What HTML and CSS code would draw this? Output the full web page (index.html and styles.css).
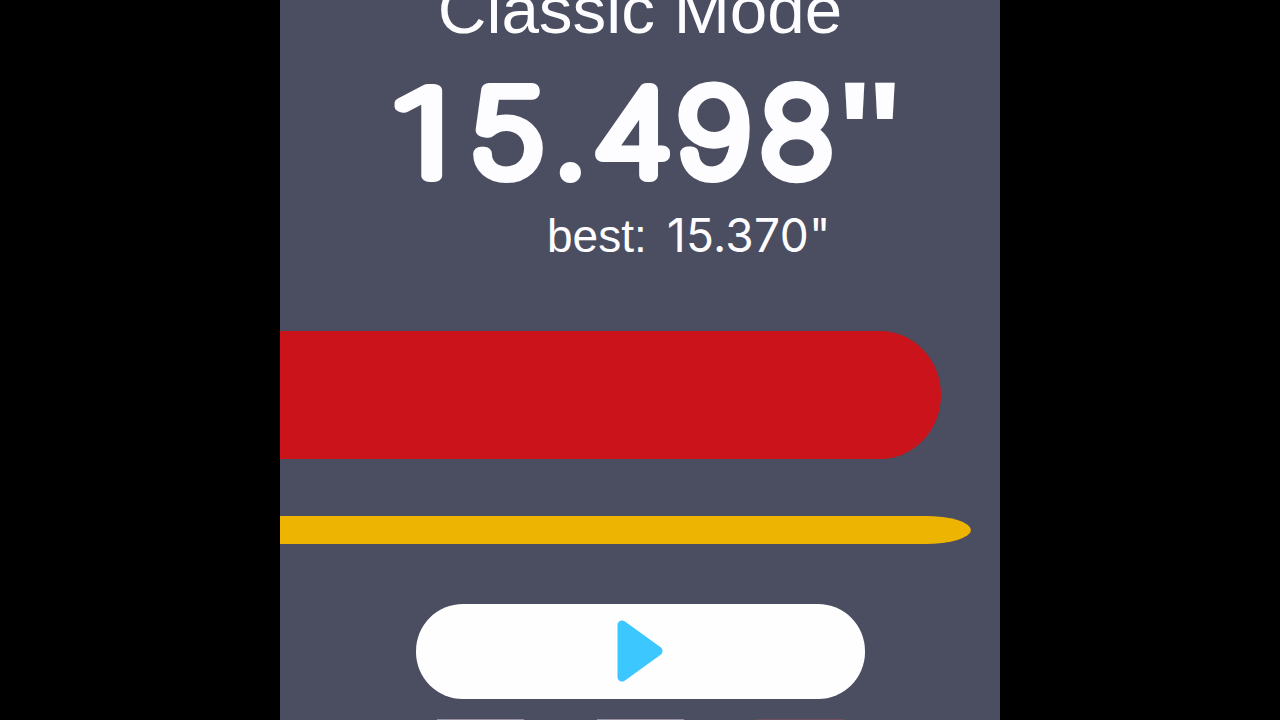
FILE: index.html
```
<!DOCTYPE html>
<html lang="en">
<head>
    <meta charset="UTF-8">
    <meta name="viewport" content="width=device-width, initial-scale=1.0">
    <title>Classic Mode</title>
    <link rel="stylesheet" href="styles.css">
</head>
<body>
    <main class="screen">
        <h1>Classic Mode</h1>

        <svg class="score" width="720" height="120" viewBox="0 0 720 120" role="img" aria-label="Score">
            <text class="score-digits score-one" y="103.5" x="78.3" transform="scale(1.42 1)">1</text>
            <text class="score-digits" y="103" x="168.9" transform="scale(1.125 1)">5</text>
            <text class="score-dot" y="110" x="269.5">.</text>
            <text class="score-digits" y="103" x="278.4 352.6" transform="scale(1.125 1)">49</text>
            <text class="score-digits score-eight" y="103" x="461.9" transform="scale(1.04 1)">8</text>
            <text class="score-unit" y="111" x="555.5">"</text>
        </svg>

        <p class="best">
            <span class="best-label">best:</span>
            <span class="best-time">15.370"</span>
        </p>

        <div class="bar bar-red"></div>
        <div class="bar bar-yellow"></div>

        <button class="play-btn" aria-label="Play">
            <svg width="48" height="64" viewBox="0 0 48 64">
                <path d="M6 6 L42 32 L6 58 Z" />
            </svg>
        </button>

        <div class="bottom-buttons">
            <span class="small-btn"></span>
            <span class="small-btn"></span>
            <span class="small-btn small-btn-red"></span>
        </div>
    </main>
</body>
</html>
```
FILE: styles.css
```
/* General Styling */
* {
    margin: 0;
    padding: 0;
    box-sizing: border-box;
}

body {
    background: #000;
    color: #fdfdff;
    font-family: "Liberation Sans", sans-serif;
    overflow: hidden;
}

.screen {
    display: flex;
    flex-direction: column;
    width: 720px;
    height: 720px;
    margin: 0 auto;
    background: #4b4d61;
    overflow: hidden;
}

h1 {
    flex: none;
    height: 72px;
    margin-top: -26px;
    font-size: 67.4px;
    font-weight: normal;
    line-height: 72px;
    text-align: center;
}

/* Score */
.score {
    flex: none;
    display: block;
    margin-top: 26px;
    fill: #fdfdff;
    overflow: visible;
}

.score-digits {
    font-family: Inter, sans-serif;
    font-size: 117.5px;
    font-weight: 100;
    stroke: #fdfdff;
    stroke-width: 14px;
    stroke-linejoin: round;
}

.score-one {
    stroke-width: 12px;
}

.score-eight {
    stroke-width: 14.5px;
}

.score-dot {
    font-family: Inter, sans-serif;
    font-size: 125px;
    font-weight: 700;
}

.score-unit {
    font-size: 145px;
    font-weight: bold;
}

.best {
    display: flex;
    align-items: baseline;
    flex: none;
    height: 56px;
    margin-top: 15px;
    padding-left: 267px;
    line-height: 56px;
    white-space: nowrap;
}

.best-label {
    width: 120px;
    font-size: 46px;
}

.best-time {
    font-family: Inter, sans-serif;
    font-size: 46px;
    font-weight: 400;
    letter-spacing: 0.3px;
}

/* Time bars */
.bar {
    flex: none;
}

.bar-red {
    width: 661px;
    height: 128px;
    margin-top: 68px;
    background: #ca131a;
    border-radius: 0 61px 61px 0 / 0 64px 64px 0;
}

.bar-yellow {
    width: 691px;
    height: 28px;
    margin-top: 57px;
    background: #edb401;
    border-radius: 0 46px 46px 0 / 0 14px 14px 0;
}

/* Buttons */
.play-btn {
    display: flex;
    align-items: center;
    justify-content: center;
    flex: none;
    align-self: center;
    width: 449px;
    height: 95px;
    margin-top: 59.5px;
    background: #fffeff;
    border: none;
    border-radius: 47px;
    cursor: pointer;
}

.play-btn path {
    fill: #3dc7ff;
    stroke: #3dc7ff;
    stroke-width: 9px;
    stroke-linejoin: round;
}

.bottom-buttons {
    display: flex;
    justify-content: center;
    gap: 73px;
    flex: none;
    margin-top: 20.5px;
}

.small-btn {
    width: 87px;
    height: 1px;
    background: #96909f;
}

.small-btn-red {
    background: #73505f;
}
```
